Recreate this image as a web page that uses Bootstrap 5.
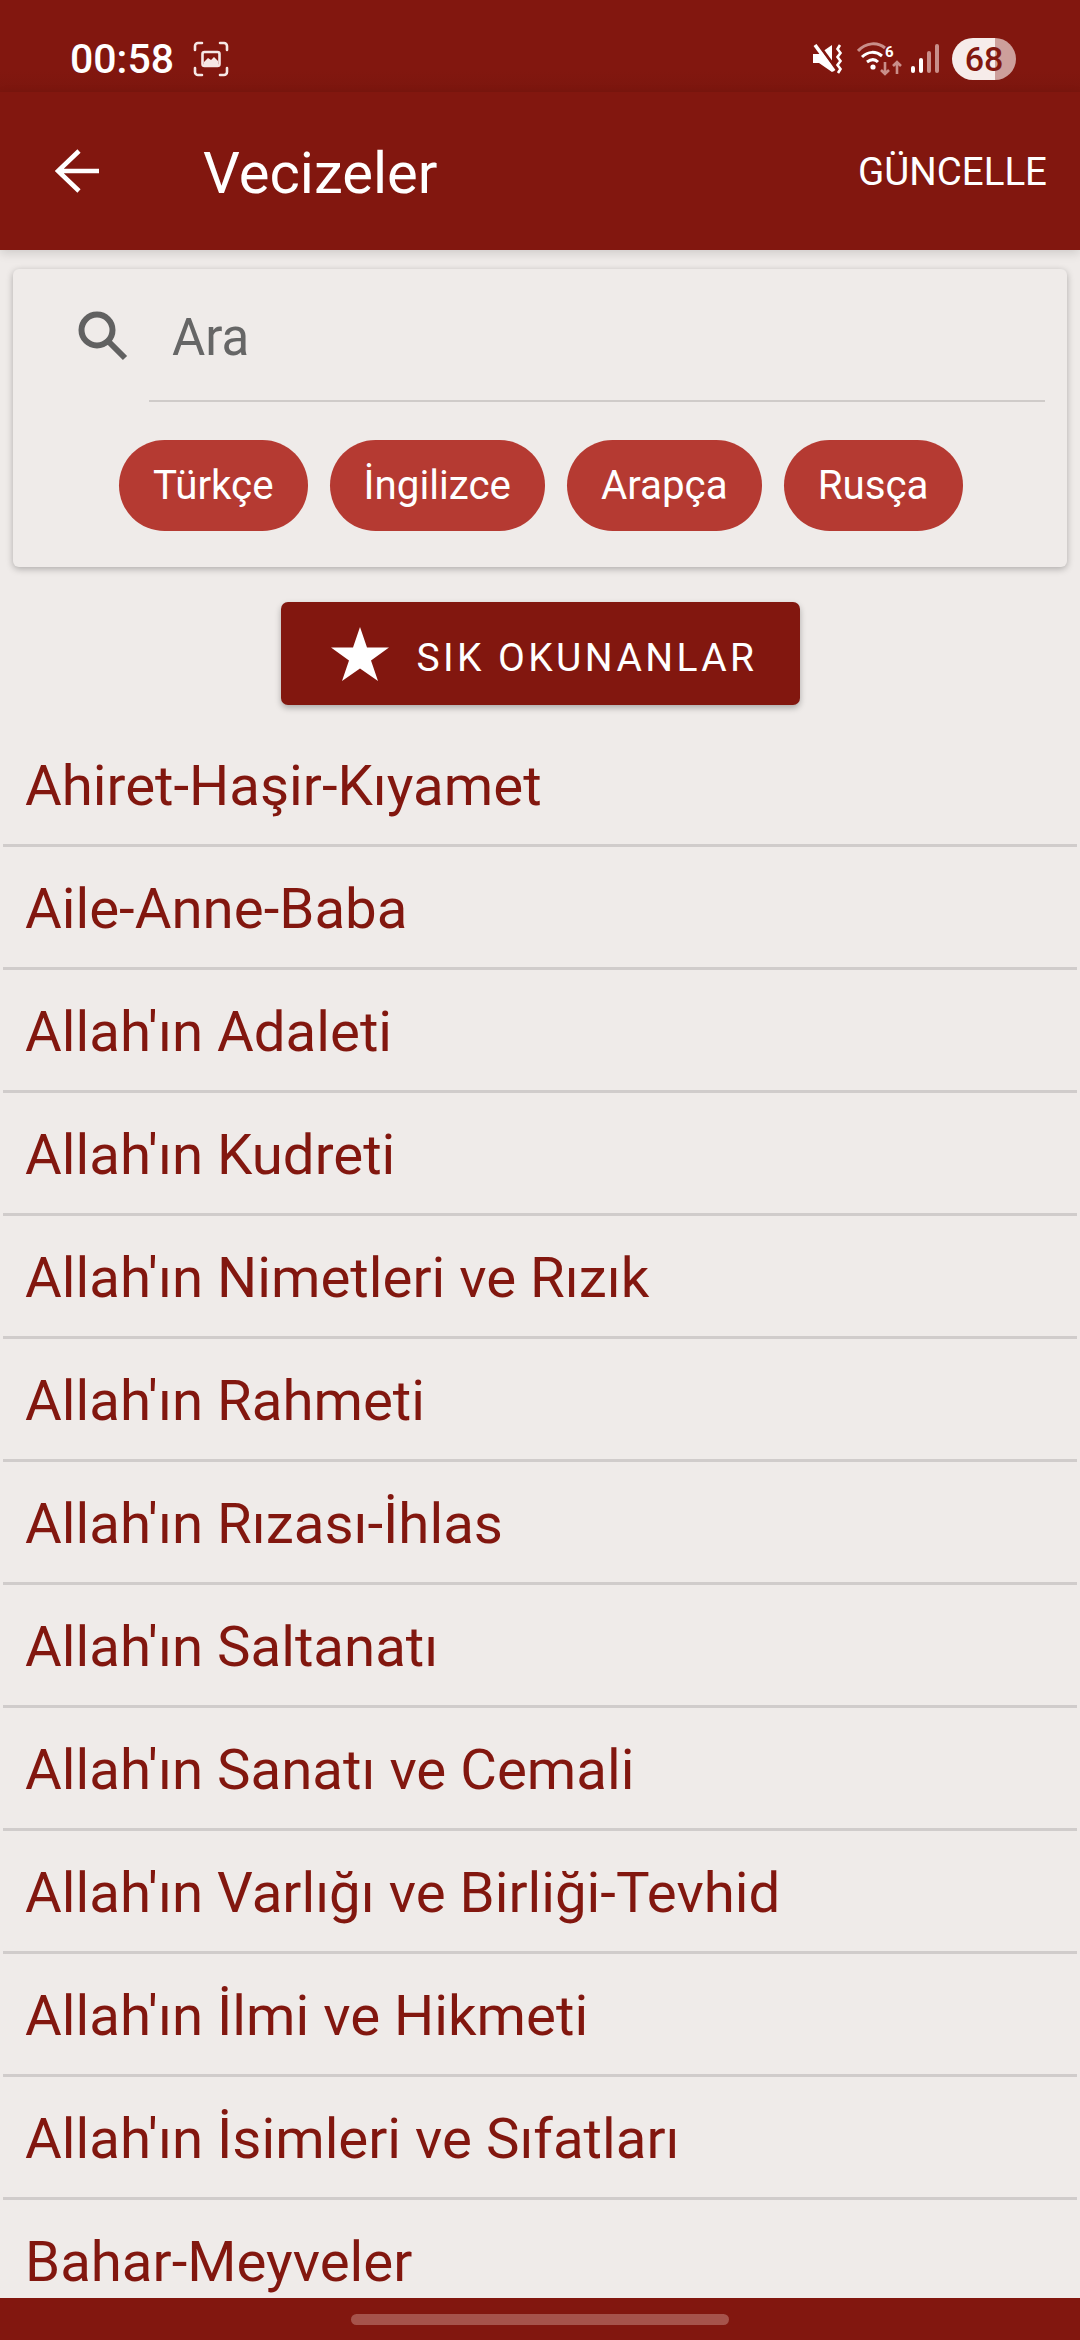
<!DOCTYPE html>
<html lang="en">
<head>
  <meta charset="UTF-8">
  <title>Vecizeler</title>
  <meta name="viewport" content="width=device-width, initial-scale=1" />
  <link href="https://cdn.jsdelivr.net/npm/bootstrap@5.3.2/dist/css/bootstrap.min.css" rel="stylesheet">
  <style>
    html, body {
      height: 2340px;
      overflow: hidden;
    }
    body {
      background: #efebe9;
      font-family: Roboto, "Liberation Sans", sans-serif;
    }
    .phone {
      height: 2340px;
    }
    .status-bar {
      height: 92px;
      padding: 26px 64px 0 70px;
      background: linear-gradient(#82170f 75%, #7c160e);
      color: #fff;
    }
    .status-left {
      gap: 19px;
    }
    .clock {
      font-size: 41px;
      font-weight: 500;
      line-height: 1;
    }
    .icon-mute {
      margin-right: 14px;
    }
    .icon-wifi {
      margin-right: 8px;
    }
    .battery {
      width: 64px;
      height: 42px;
      border-radius: 21px;
      margin-left: 13px;
      background: linear-gradient(90deg, #f6ecea 67%, #cd9f9b 67%);
      color: #82170f;
      font-size: 34px;
      font-weight: 500;
      line-height: 42px;
      text-align: center;
    }
    .app-bar {
      height: 158px;
      padding: 0 33px 0 55px;
      background: #82170f;
      color: #fff;
      z-index: 2;
      box-shadow: 0 3px 10px rgba(0, 0, 0, .14);
    }
    .app-title {
      margin: 4px 0 0 104px;
      font-size: 58px;
      font-weight: 400;
      line-height: 1;
    }
    .update-btn {
      margin-top: 2px;
      font-size: 38.500px;
      line-height: 1;
    }
    .content {
      min-height: 0;
    }
    .search-card {
      margin: 19px 13px 0;
      height: 298px;
      background: #efebe9;
      border: 0;
      border-radius: 6px;
      box-shadow: 0 2px 7px rgba(0, 0, 0, .28);
    }
    .search-row {
      height: 133px;
      margin: 0 22px 0 65px;
    }
    .search-input {
      height: 100%;
      margin-left: 21px;
      padding: 5px 0 0 23px;
      background: transparent;
      border: 0;
      border-bottom: 2px solid #cfcbc9;
      border-radius: 0;
      color: #666;
      font-size: 51px;
    }
    .search-input::placeholder {
      color: #666;
      opacity: 1;
    }
    .lang-row {
      margin-top: 38px;
      padding-left: 106px;
      gap: 22px;
    }
    .lang-chip {
      height: 91px;
      padding: 0 34px;
      background: #b53a32;
      border: 0;
      border-radius: 46px;
      color: #fff;
      font-size: 40.300px;
      line-height: 91px;
    }
    .fav-btn {
      width: 519px;
      height: 103px;
      margin: 35px auto 0;
      padding: 10px 0 0 8px;
      background: #82170f;
      border: 0;
      border-radius: 7px;
      box-shadow: 0 3px 6px rgba(0, 0, 0, .28);
      color: #fff;
      font-size: 39px;
      letter-spacing: 3.4px;
      gap: 28px;
    }
    .fav-btn svg {
      margin-top: -10px;
    }
    .topic-list {
      margin-top: 19px;
      background: transparent;
    }
    .topic-item {
      height: 123px;
      margin: 0 3px;
      padding: 0 0 0 22px;
      background: transparent;
      border: 0;
      border-bottom: 3px solid #d0cccb;
      border-radius: 0;
      color: #82170f;
      font-size: 56.400px;
      line-height: 124px;
      white-space: nowrap;
    }
    .nav-strip {
      height: 42px;
      background: #82170f;
    }
    .nav-handle {
      width: 378px;
      height: 11px;
      border-radius: 6px;
      background: #a6534b;
    }
  </style>
</head>
<body>

<div class="phone d-flex flex-column">
  <div class="status-bar d-flex align-items-center justify-content-between flex-shrink-0">
    <div class="status-left d-flex align-items-center">
      <span class="clock">00:58</span>
      <svg width="36" height="36" viewBox="0 0 36 36" fill="none" stroke="#f6e8e6" stroke-width="2.6" stroke-linecap="round">
        <path d="M2 9V5a3 3 0 0 1 3-3h4M27 2h4a3 3 0 0 1 3 3v4M34 27v4a3 3 0 0 1-3 3h-4M9 34H5a3 3 0 0 1-3-3v-4"/>
        <rect x="9.500" y="11" width="17" height="14" rx="2"/>
        <path d="M11 24v-3l4-4 3 2 3-3 4 4v4z" fill="#f6e8e6" stroke="none"/>
      </svg>
    </div>
    <div class="d-flex align-items-center">
      <svg width="30" height="30" viewBox="0 0 30 30" class="icon-mute">
        <path d="M0 10h6l13-9v27l-13-9H0z" fill="#fff"/>
        <path d="M5 0l19 26" stroke="#82170f" stroke-width="3"/>
        <path d="M2 1l19 26" stroke="#fff" stroke-width="3.600"/>
        <path d="M27 1l-2.500 4 3 4-3 4 3 4-3 4 3 4-2.500 4" fill="none" stroke="#fff" stroke-width="2.600"/>
      </svg>
      <svg width="46" height="34" viewBox="0 0 46 34" class="icon-wifi">
        <path d="M1 9c8-9 20-9 27-3" fill="none" stroke="#c98f8a" stroke-width="3"/>
        <path d="M5 15c6-6 14-6 20-1" fill="none" stroke="#fff" stroke-width="3"/>
        <path d="M10 20c4-3 8-3 11 0" fill="none" stroke="#fff" stroke-width="3"/>
        <circle cx="16" cy="25" r="2.600" fill="#fff"/>
        <path d="M28 20v12m-4-4l4 4 4-4M40 32V20m-4 4l4-4 4 4" fill="none" stroke="#c98f8a" stroke-width="2.600"/>
        <text x="28" y="15" fill="#fff" font-family="Roboto, sans-serif" font-size="15" font-weight="700">6</text>
      </svg>
      <svg width="28" height="30" viewBox="0 0 28 30">
        <rect x="0" y="22" width="4" height="7" rx="2" fill="#fff"/>
        <rect x="8" y="14" width="4" height="15" rx="2" fill="#fff"/>
        <rect x="16" y="7" width="4" height="22" rx="2" fill="#c98f8a"/>
        <rect x="24" y="0" width="4" height="29" rx="2" fill="#c98f8a"/>
      </svg>
      <div class="battery">68</div>
    </div>
  </div>

  <div class="app-bar d-flex align-items-center justify-content-between flex-shrink-0">
    <div class="d-flex align-items-center">
      <svg width="44" height="44" viewBox="0 0 44 44" fill="none" stroke="#fff" stroke-width="4.600">
        <path d="M44 22H4M24 2L3 22l21 20"/>
      </svg>
      <h1 class="app-title">Vecizeler</h1>
    </div>
    <span class="update-btn">GÜNCELLE</span>
  </div>

  <div class="content flex-grow-1 overflow-hidden">
    <div class="card search-card">
      <div class="search-row d-flex align-items-center">
        <svg width="50" height="50" viewBox="0 0 50 50" class="flex-shrink-0" fill="none" stroke="#616161" stroke-width="6">
          <circle cx="19" cy="19" r="15.500"/>
          <path d="M30 30l17 17"/>
        </svg>
        <input class="form-control search-input shadow-none" type="text" placeholder="Ara">
      </div>
      <div class="lang-row d-flex">
        <button class="btn lang-chip" type="button">Türkçe</button>
        <button class="btn lang-chip" type="button">İngilizce</button>
        <button class="btn lang-chip" type="button">Arapça</button>
        <button class="btn lang-chip" type="button">Rusça</button>
      </div>
    </div>

    <button class="btn fav-btn d-flex align-items-center justify-content-center" type="button">
      <svg width="58" height="54" viewBox="0 0 58 54" fill="#fff"><path d="M29 0l7 20.500h22L40 33.500 47 54 29 41.500 11 54l7-20.500L0 20.500h22z"/></svg>
      <span>SIK OKUNANLAR</span>
    </button>

    <div class="list-group topic-list" id="topicList"></div>
  </div>

  <div class="nav-strip d-flex justify-content-center align-items-center flex-shrink-0">
    <div class="nav-handle"></div>
  </div>
</div>

<script>
  const topics = [
    "Ahiret-Haşir-Kıyamet",
    "Aile-Anne-Baba",
    "Allah'ın Adaleti",
    "Allah'ın Kudreti",
    "Allah'ın Nimetleri ve Rızık",
    "Allah'ın Rahmeti",
    "Allah'ın Rızası-İhlas",
    "Allah'ın Saltanatı",
    "Allah'ın Sanatı ve Cemali",
    "Allah'ın Varlığı ve Birliği-Tevhid",
    "Allah'ın İlmi ve Hikmeti",
    "Allah'ın İsimleri ve Sıfatları",
    "Bahar-Meyveler"
  ];
  const list = document.getElementById("topicList");
  topics.forEach((name) => {
    const row = document.createElement("div");
    row.className = "list-group-item topic-item";
    row.textContent = name;
    list.appendChild(row);
  });
</script>
<script src="https://cdn.jsdelivr.net/npm/bootstrap@5.3.2/dist/js/bootstrap.bundle.min.js"></script>
</body>
</html>
